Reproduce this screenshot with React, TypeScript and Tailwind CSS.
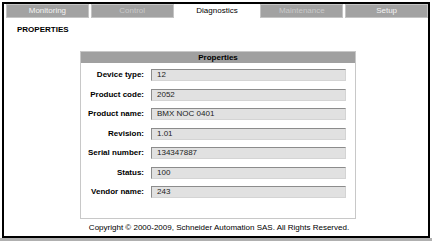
const tabs = [
  { label: 'Monitoring', state: 'on' },
  { label: 'Control', state: 'off' },
  { label: 'Diagnostics', state: 'active' },
  { label: 'Maintenance', state: 'off' },
  { label: 'Setup', state: 'on' },
]

const rows = [
  ['Device type:', '12'],
  ['Product code:', '2052'],
  ['Product name:', 'BMX NOC 0401'],
  ['Revision:', '1.01'],
  ['Serial number:', '134347887'],
  ['Status:', '100'],
  ['Vendor name:', '243'],
]

export default function App() {
  return (
    <div className="h-[242px] w-[432px] overflow-hidden bg-white font-['Liberation_Sans',Arial,sans-serif] text-[8px] leading-none text-black">
      <div className="border-b-[3px] border-[#b0b0b0] pt-[2px] pl-[2px]">
        <div className="flex h-[236px] w-[428px] flex-col border-2 border-black">
          {/* Tab bar */}
          <div className="ml-[2px] grid h-[14px] grid-cols-5 gap-[2px]">
            {tabs.map((t) =>
              t.state === 'active' ? (
                <div key={t.label} className="flex items-center justify-center bg-white text-black">
                  {t.label}
                </div>
              ) : (
                <div
                  key={t.label}
                  className={
                    t.state === 'on'
                      ? 'flex items-center justify-center border border-[#c4c4c4] bg-[#a2a2a2] text-[#f2f2f2]'
                      : 'flex items-center justify-center border border-[#c4c4c4] bg-[#a2a2a2] text-[#c9c9c9]'
                  }
                >
                  {t.label}
                </div>
              )
            )}
          </div>

          <div className="mt-[8px] ml-[13px] font-bold">PROPERTIES</div>

          {/* Properties box */}
          <div className="mt-[17px] ml-[76px] w-[276px] border border-[#c8c8c8] bg-white">
            <div className="flex h-[11px] items-center justify-center bg-[#a0a0a0] font-bold">Properties</div>
            <div className="flex flex-col gap-[7.5px] pt-[6px] pb-[20px]">
              {rows.map(([label, value]) => (
                <div key={label} className="flex h-[12px] items-center">
                  <div className="w-[66px] pr-[3px] text-right font-bold">{label}</div>
                  <div className="ml-[4px] flex h-[12px] w-[195px] items-center border border-t-[#8c8c8c] border-r-[#d4d4d4] border-b-[#d4d4d4] border-l-[#8c8c8c] bg-[#e1e1e1] pl-[5px] text-[#222]">
                    {value}
                  </div>
                </div>
              ))}
            </div>
          </div>

          <div className="mt-[5px] ml-[77px] w-[276px] text-center">
            Copyright © 2000-2009, Schneider Automation SAS. All Rights Reserved.
          </div>
        </div>
      </div>
    </div>
  )
}
